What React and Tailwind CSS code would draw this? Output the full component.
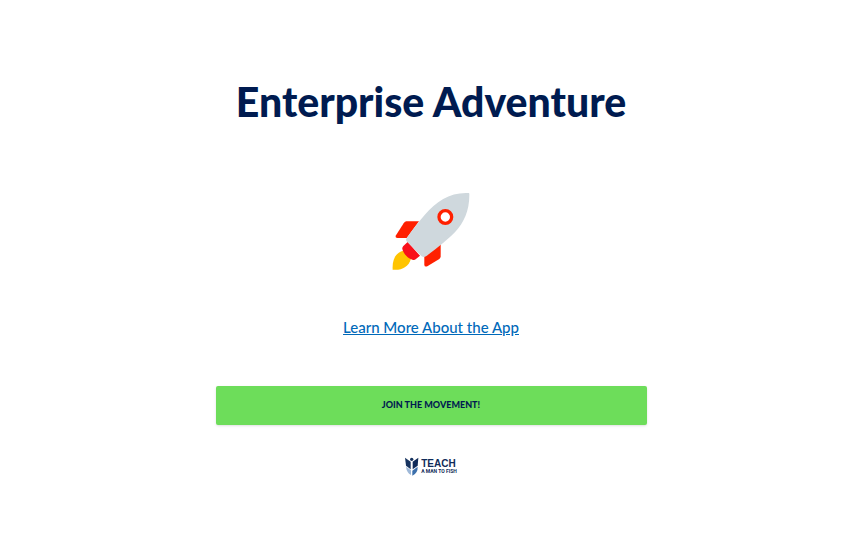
function Rocket() {
  return (
    <svg viewBox="0 0 276 276" className="size-23" role="img" aria-label="Rocket">
      <path d="M64 109H102L65 159H38Q29 159 33 151L56 115Q60 109 64 109Z" fill="#ff2000" />
      <path d="M167 177V214Q167 219 163 222L127 244Q118 247 118 239V208Z" fill="#ff2000" />
      <path d="M55 197C32 202 21 224 23 254C49 257 71 246 78 221Z" fill="#ffc400" />
      <path d="M68 171L105 212L92 223Q88 227 82 224C67 219 56 207 52 192Q51 188 55 183Z" fill="#f9101a" />
      <path d="M251 24Q253 24 253 27C254 75 237 113 211 140C190 162 162 184 123 214Q116 219 109 213L67 171Q60 165 66 158C84 132 101 111 119 90C155 48 196 21 251 24Z" fill="#cfd8dd" />
      <circle cx="181" cy="96" r="19" fill="#fff" stroke="#ff2000" strokeWidth="10" />
    </svg>
  );
}

function TeachMark() {
  return (
    <svg viewBox="0 0 42 57" className="h-[19px] w-[14px]" aria-hidden="true">
      <path d="M0 2L17 14V37L3 26Z" fill="#17335f" />
      <path d="M40 2L23 14V37L38 26Z" fill="#102b59" />
      <circle cx="20" cy="7" r="5" fill="#17335f" />
      <path d="M3 29L18 40V54Q5 47 3 29Z" fill="#9eb8d8" />
      <path d="M38 29L22 41V56Q39 48 38 29Z" fill="#3c70ac" />
    </svg>
  );
}

export default function App() {
  return (
    <main className="flex min-h-screen flex-col items-center bg-white pt-[75px] font-['Lato',sans-serif] text-[#001b50]">
      <h1 className="text-center text-[41px] leading-[54px] font-black">Enterprise Adventure</h1>
      <div className="mt-14">
        <Rocket />
      </div>
      <a href="#about" className="mt-10 text-[15px] leading-[21px] font-medium text-[#0069b9] underline underline-offset-1">
        Learn More About the App
      </a>
      <button
        type="button"
        className="mt-12 h-[39px] w-1/2 rounded-xs bg-[#6ddd5a] pb-[2px] text-[9px] leading-4 font-black uppercase shadow-sm"
      >
        Join the movement!
      </button>
      <footer className="mt-8 flex items-center gap-[2px] text-[#102b59]">
        <TeachMark />
        <div className="font-['Liberation_Sans',sans-serif] font-bold">
          <p className="text-[10px] leading-[10px]">TEACH</p>
          <p className="font-['Roboto',sans-serif] text-[5px] leading-[5px]">A MAN TO FISH</p>
        </div>
      </footer>
    </main>
  );
}
